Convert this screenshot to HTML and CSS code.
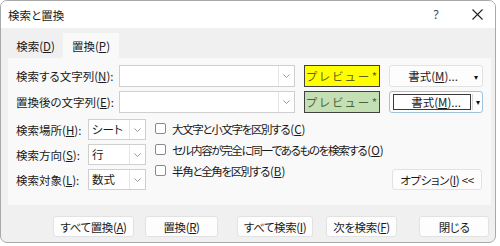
FILE: index.html
```html
<!DOCTYPE html>
<html lang="ja">
<head>
<meta charset="utf-8">
<link rel="stylesheet" href="styles.css">
</head>
<body>
<div class="win">
  <div class="titlebar">
    <span class="title">検索と置換</span>
    <span class="help">?</span>
    <span class="close"><svg width="11" height="11" viewBox="0 0 11 11"><path d="M0.5 0.5 L10.5 10.5 M10.5 0.5 L0.5 10.5" stroke="#222" stroke-width="1.1" fill="none"/></svg></span>
  </div>
  <div class="tabs">
    <div class="tab">検索(<u>D</u>)</div>
    <div class="tab active">置換(<u>P</u>)</div>
  </div>
  <div class="panel">
    <div class="row">
      <span class="lbl">検索する文字列(<u>N</u>):</span>
      <div class="combo"><div class="combo-text"></div><div class="combo-btn"><svg width="7" height="4" viewBox="0 0 7 4"><path d="M0.5 0.5 L3.5 3.5 L6.5 0.5" stroke="#999" fill="none"/></svg></div></div>
      <div class="preview yellow">プレビュー*</div>
      <div class="fmt"><span class="fmt-label">書式(<u>M</u>)...</span><span class="fmt-arrow">▾</span></div>
    </div>
    <div class="row">
      <span class="lbl">置換後の文字列(<u>E</u>):</span>
      <div class="combo"><div class="combo-text"></div><div class="combo-btn"><svg width="7" height="4" viewBox="0 0 7 4"><path d="M0.5 0.5 L3.5 3.5 L6.5 0.5" stroke="#999" fill="none"/></svg></div></div>
      <div class="preview green">プレビュー*</div>
      <div class="fmt focus"><span class="fmt-label">書式(<u>M</u>)...</span><span class="fmt-arrow">▾</span></div>
    </div>
    <div class="opts">
      <div class="sels">
        <div class="srow"><span class="slbl">検索場所(<u>H</u>):</span><div class="select"><span class="sel-text">シート</span><span class="sel-btn"><svg width="7" height="4" viewBox="0 0 7 4"><path d="M0.5 0.5 L3.5 3.5 L6.5 0.5" stroke="#999" fill="none"/></svg></span></div></div>
        <div class="srow"><span class="slbl">検索方向(<u>S</u>):</span><div class="select"><span class="sel-text">行</span><span class="sel-btn"><svg width="7" height="4" viewBox="0 0 7 4"><path d="M0.5 0.5 L3.5 3.5 L6.5 0.5" stroke="#999" fill="none"/></svg></span></div></div>
        <div class="srow"><span class="slbl">検索対象(<u>L</u>):</span><div class="select"><span class="sel-text">数式</span><span class="sel-btn"><svg width="7" height="4" viewBox="0 0 7 4"><path d="M0.5 0.5 L3.5 3.5 L6.5 0.5" stroke="#999" fill="none"/></svg></span></div></div>
      </div>
      <div class="checks">
        <div class="chk"><span class="box"></span><span class="ctext">大文字と小文字を区別する</span><span class="mn">(<u>C</u>)</span></div>
        <div class="chk"><span class="box"></span><span class="ctext">セル内容が完全に同一であるものを検索する</span><span class="mn">(<u>O</u>)</span></div>
        <div class="chk"><span class="box"></span><span class="ctext">半角と全角を区別する</span><span class="mn">(<u>B</u>)</span></div>
      </div>
      <div class="optbtn">オプション(<u>I</u>) &lt;&lt;</div>
    </div>
  </div>
  <div class="actions">
    <div class="btn b1">すべて置換(<u>A</u>)</div>
    <div class="btn b2">置換(<u>R</u>)</div>
    <div class="btn b3">すべて検索(<u>I</u>)</div>
    <div class="btn b4">次を検索(<u>F</u>)</div>
    <div class="btn b5">閉じる</div>
  </div>
</div>
</body>
</html>
```

FILE: styles.css
```css
* { box-sizing: border-box; }
html, body { margin: 0; padding: 0; background: #ffffff; }
body {
  font-family: "Noto Sans CJK JP", "Noto Sans", sans-serif;
  font-size: 11.5px;
  font-feature-settings: "palt";
  color: #1a1a1a;
  width: 500px;
  height: 246px;
  overflow: hidden;
  white-space: nowrap;
}
u { text-decoration-thickness: 1px; text-underline-offset: 1px; }

.win {
  width: 496px;
  height: 243px;
  border: 1px solid #a9a9a9;
  border-radius: 7px;
  background: #f0f0f0;
  overflow: hidden;
  display: flex;
  flex-direction: column;
}

.titlebar {
  height: 27px;
  flex: none;
  background: #ffffff;
  display: flex;
  align-items: center;
  padding-left: 7px;
}
.title { line-height: 14px; }
.help { margin-left: auto; width: 12px; text-align: center; font-family: "Noto Sans", sans-serif; font-size: 12px; color: #444; margin-right: 30px; }
.close { width: 11px; height: 11px; display: flex; margin-right: 12px; }

.tabs {
  display: flex;
  margin-top: 5px;
  padding-left: 7px;
  height: 25px;
  flex: none;
}
.tab {
  width: 55px;
  display: flex;
  align-items: center;
  justify-content: center;
  line-height: 14px;
  padding-top: 1px;
}
.tab.active { width: 56px; background: #f9f9f9; }

.panel {
  height: 147px;
  flex: none;
  margin: 0 4px 0 7px;
  background: #f9f9f9;
  padding: 7px 8px 0 8px;
}

.row {
  display: flex;
  align-items: center;
  height: 22px;
  margin-bottom: 4px;
}
.lbl { width: 103px; flex: none; line-height: 14px; }
.combo {
  width: 176px;
  flex: none;
  height: 22px;
  border: 1px solid #cfcfcf;
  background: #fff;
  display: flex;
}
.combo-text { flex: 1; }
.combo-btn {
  width: 16px;
  border-left: 1px solid #e6e6e6;
  display: flex;
  align-items: center;
  justify-content: center;
}
.preview {
  width: 76px;
  flex: none;
  height: 22px;
  margin-left: 9px;
  border: 1px solid #404040;
  display: flex;
  align-items: center;
  justify-content: center;
  letter-spacing: 2.6px;
  padding-left: 2px;
  line-height: 14px;
}
.yellow { background: #ffff00; color: #5f6410; }
.green { background: #c4dfb3; color: #46663a; }
.fmt {
  width: 94px;
  flex: none;
  height: 22px;
  margin-left: 9px;
  background: #fdfdfd;
  border: 1px solid #e2e2e2;
  border-radius: 3px;
  display: flex;
  align-items: center;
}
.fmt-label { flex: 1; text-align: center; line-height: 14px; padding-left: 6px; }
.fmt-arrow { width: 12px; font-size: 8px; text-align: center; color: #111; }
.fmt.focus { border-color: #9ec3da; }
.fmt.focus .fmt-label {
  flex: none;
  width: 78px;
  height: 16px;
  margin-left: 3px;
  border: 1px solid #3a3a3a;
  background: #fff;
  padding-left: 8px;
  display: flex;
  align-items: center;
  justify-content: center;
}
.fmt.focus .fmt-arrow { border-left: 1px solid #d8d8d8; height: 16px; line-height: 16px; margin-left: 1px; }

.opts {
  display: flex;
  margin-top: 6px;
}
.sels { display: flex; flex-direction: column; gap: 4px; flex: none; }
.srow { display: flex; align-items: center; height: 21px; }
.slbl { width: 72px; line-height: 14px; }
.select {
  width: 58px;
  height: 21px;
  border: 1px solid #cfcfcf;
  background: #fff;
  display: flex;
}
.sel-text { flex: 1; padding-left: 3px; line-height: 19px; }
.sel-btn {
  width: 16px;
  border-left: 1px solid #e6e6e6;
  display: flex;
  align-items: center;
  justify-content: center;
}
.checks {
  display: flex;
  flex-direction: column;
  margin-left: 9px;
  margin-top: -1px;
  flex: 1;
  min-width: 0;
}
.chk { display: flex; align-items: center; height: 21px; line-height: 14px; }
.ctext { letter-spacing: -1.35px; }
.mn { margin-left: 1px; }
.box {
  width: 11px;
  height: 11px;
  border: 1px solid #8a8a8a;
  border-radius: 2px;
  background: #fff;
  margin-right: 6px;
  flex: none;
}
.optbtn {
  margin-right: 1px;
  align-self: flex-end;
  width: 90px;
  flex: none;
  height: 21px;
  background: #fdfdfd;
  border: 1px solid #e2e2e2;
  border-radius: 3px;
  display: flex;
  align-items: center;
  justify-content: center;
  line-height: 14px;
  letter-spacing: -0.3px;
}

.actions {
  display: flex;
  margin-top: 11px;
  height: 21px;
}
.btn {
  height: 21px;
  flex: none;
  background: #fdfdfd;
  border: 1px solid #e2e2e2;
  border-radius: 3px;
  display: flex;
  align-items: center;
  justify-content: center;
  line-height: 14px;
  letter-spacing: -0.4px;
}
.b1 { width: 81px; margin-left: 52px; }
.b2 { width: 73px; margin-left: 11px; }
.b3 { width: 76px; margin-left: 19px; }
.b4 { width: 71px; margin-left: 13px; }
.b5 { width: 70px; margin-left: 22px; }
```
